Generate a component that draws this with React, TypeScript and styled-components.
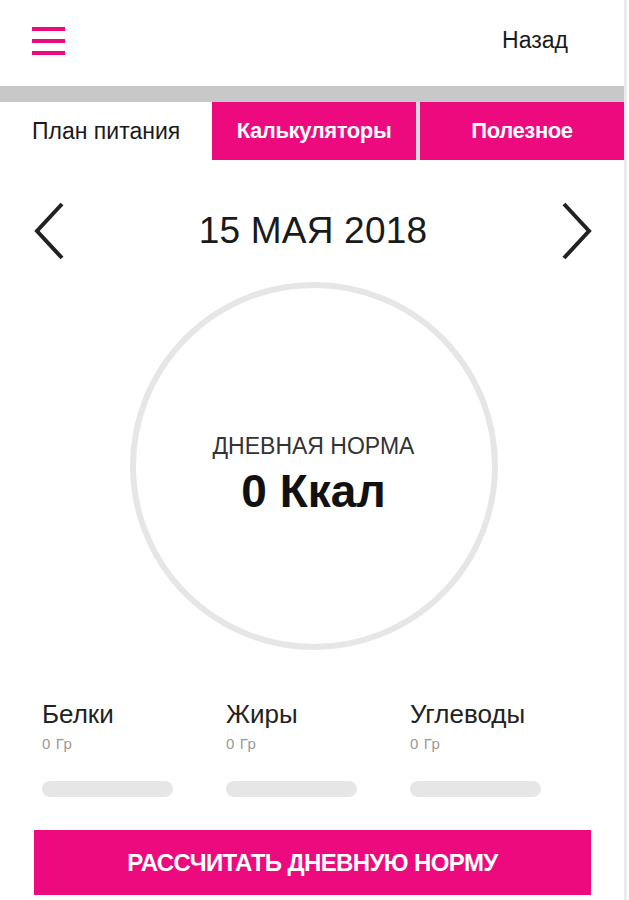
import { FC } from 'react';
import styled, { createGlobalStyle } from 'styled-components';

const PINK = '#ed0a7e';

const GlobalStyle = createGlobalStyle`
  html, body {
    margin: 0;
    padding: 0;
    background: #fff;
  }
  body {
    font-family: 'Liberation Sans', Arial, sans-serif;
    color: #1a1a1a;
  }
`;

const Page = styled.div`
  width: 624px;
  min-height: 900px;
  border-right: 3px solid #ececec;
  display: flex;
  flex-direction: column;
`;

const Header = styled.header`
  height: 86px;
  display: flex;
  align-items: center;
  justify-content: space-between;
  padding: 0 56px 0 32px;
  box-sizing: border-box;
`;

const Burger = styled.button`
  width: 33px;
  height: 28px;
  padding: 0;
  border: 0;
  background: none;
  display: flex;
  flex-direction: column;
  justify-content: space-between;
  margin-top: -4px;

  span {
    display: block;
    height: 4px;
    background: ${PINK};
  }
`;

const BackLink = styled.a`
  font-size: 23px;
  color: #1a1a1a;
  text-decoration: none;
  margin-top: -6px;
`;

const Divider = styled.div`
  height: 16px;
  background: #c8c8c8;
`;

const Tabs = styled.nav`
  display: grid;
  grid-template-columns: 212px 204px 208px;
  height: 58px;
`;

const Tab = styled.div<{ $active?: boolean; $separated?: boolean }>`
  display: flex;
  align-items: center;
  justify-content: ${({ $active }) => ($active ? 'flex-start' : 'center')};
  padding-left: ${({ $active }) => ($active ? '32px' : '0')};
  border-left: ${({ $separated }) => ($separated ? '4px solid #d9d9d9' : '0')};
  background: ${({ $active }) => ($active ? '#fff' : PINK)};
  color: ${({ $active }) => ($active ? '#1a1a1a' : '#fff')};
  font-weight: ${({ $active }) => ($active ? 400 : 700)};
  font-size: ${({ $active }) => ($active ? '23px' : '22px')};
  letter-spacing: ${({ $active }) => ($active ? '0' : '-0.4px')};
`;

const DateRow = styled.div`
  display: flex;
  align-items: center;
  justify-content: space-between;
  padding: 42px 30px 0 32px;
  height: 58px;
`;

const Arrow = styled.button`
  width: 34px;
  height: 58px;
  padding: 0;
  border: 0;
  background: none;
  display: flex;
  align-items: center;
  justify-content: center;
`;

const DateLabel = styled.div`
  font-size: 37px;
  letter-spacing: 0.2px;
  color: #1a1a1a;
`;

const RingWrap = styled.div`
  display: flex;
  justify-content: center;
  padding-top: 22px;
  padding-left: 3px;
`;

const Ring = styled.div`
  width: 368px;
  height: 368px;
  box-sizing: border-box;
  border: 6px solid #e6e6e6;
  border-radius: 50%;
  display: flex;
  flex-direction: column;
  align-items: center;
  justify-content: center;
  padding-top: 18px;
`;

const RingCaption = styled.div`
  font-size: 23px;
  color: #333;
`;

const RingValue = styled.div`
  font-size: 46px;
  font-weight: 700;
  color: #111;
  margin-top: 4px;
`;

const Macros = styled.div`
  display: grid;
  grid-template-columns: repeat(3, 184px);
  padding: 49px 0 0 42px;
`;

const Macro = styled.div`
  display: flex;
  flex-direction: column;
`;

const MacroName = styled.div`
  font-size: 26px;
  color: #222;
`;

const MacroAmount = styled.div`
  font-size: 15px;
  letter-spacing: 0.6px;
  color: #999;
  margin-top: 5px;
`;

const MacroBar = styled.div`
  width: 131px;
  height: 16px;
  border-radius: 8px;
  background: #e6e6e6;
  margin-top: 29px;
`;

const Action = styled.button`
  margin: 33px 33px 0 34px;
  height: 65px;
  border: 0;
  background: ${PINK};
  color: #fff;
  font-family: 'Liberation Sans', Arial, sans-serif;
  font-weight: 700;
  font-size: 24px;
  letter-spacing: -0.6px;
  text-transform: uppercase;
`;

const Chevron: FC<{ dir: 'left' | 'right' }> = ({ dir }) => (
  <svg width="32" height="58" viewBox="0 0 32 58" fill="none">
    <path
      d={dir === 'left' ? 'M29 2 L4 29 L29 56' : 'M3 2 L28 29 L3 56'}
      stroke="#222"
      strokeWidth="4"
    />
  </svg>
);

const macros = ['Белки', 'Жиры', 'Углеводы'];

export default function App() {
  return (
    <Page>
      <GlobalStyle />
      <Header>
        <Burger aria-label="menu">
          <span />
          <span />
          <span />
        </Burger>
        <BackLink href="#">Назад</BackLink>
      </Header>
      <Divider />
      <Tabs>
        <Tab $active>План питания</Tab>
        <Tab>Калькуляторы</Tab>
        <Tab $separated>Полезное</Tab>
      </Tabs>
      <DateRow>
        <Arrow aria-label="prev">
          <Chevron dir="left" />
        </Arrow>
        <DateLabel>15 МАЯ 2018</DateLabel>
        <Arrow aria-label="next">
          <Chevron dir="right" />
        </Arrow>
      </DateRow>
      <RingWrap>
        <Ring>
          <RingCaption>ДНЕВНАЯ НОРМА</RingCaption>
          <RingValue>0 Ккал</RingValue>
        </Ring>
      </RingWrap>
      <Macros>
        {macros.map((name) => (
          <Macro key={name}>
            <MacroName>{name}</MacroName>
            <MacroAmount>0 Гр</MacroAmount>
            <MacroBar />
          </Macro>
        ))}
      </Macros>
      <Action>Рассчитать дневную норму</Action>
    </Page>
  );
}
